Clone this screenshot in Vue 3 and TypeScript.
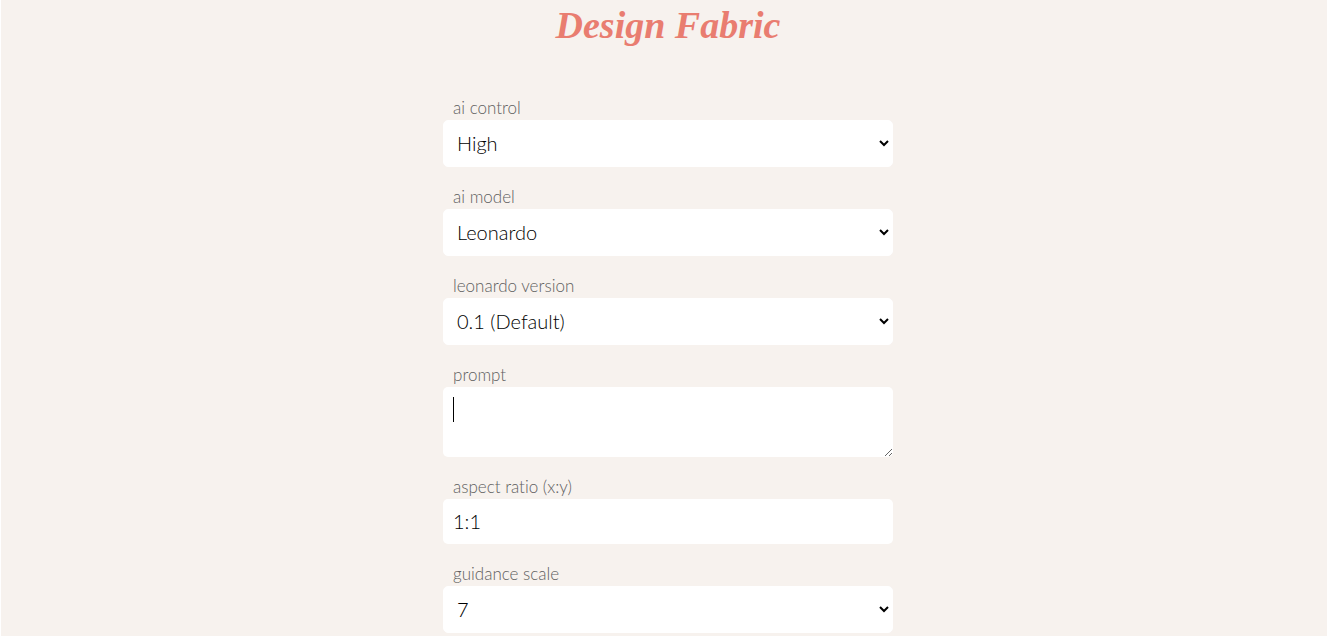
<script setup lang="ts">
import { ref, onMounted } from 'vue'

const control = ref('High')
const model = ref('Leonardo')
const version = ref('0.1 (Default)')
const prompt = ref('')
const ratio = ref('1:1')
const guidance = ref('7')

const promptBox = ref<HTMLTextAreaElement | null>(null)
onMounted(() => promptBox.value?.focus())
</script>

<template>
  <main class="page">
    <h1 class="title">Design Fabric</h1>
    <form class="form" @submit.prevent>
      <div class="field">
        <label for="control">ai control</label>
        <select id="control" v-model="control">
          <option>High</option>
          <option>Low</option>
        </select>
      </div>
      <div class="field">
        <label for="model">ai model</label>
        <select id="model" v-model="model">
          <option>Leonardo</option>
        </select>
      </div>
      <div class="field">
        <label for="version">leonardo version</label>
        <select id="version" v-model="version">
          <option>0.1 (Default)</option>
        </select>
      </div>
      <div class="field">
        <label for="prompt">prompt</label>
        <div class="prompt">
          <textarea id="prompt" ref="promptBox" v-model="prompt"></textarea>
          <span v-if="!prompt" class="caret" aria-hidden="true"></span>
        </div>
      </div>
      <div class="field">
        <label for="ratio">aspect ratio (x:y)</label>
        <input id="ratio" v-model="ratio" type="text" />
      </div>
      <div class="field">
        <label for="guidance">guidance scale</label>
        <select id="guidance" v-model="guidance">
          <option v-for="n in 20" :key="n">{{ n }}</option>
        </select>
      </div>
    </form>
  </main>
</template>

<style>
body {
  background: #f7f2ee;
}
</style>

<style scoped>
.page {
  box-sizing: border-box;
  min-height: 100vh;
  padding-left: 8px;
  border-left: 1px solid #fff;
  background: #f7f2ee;
  font-family: Lato, 'Open Sans', sans-serif;
  font-weight: 300;
  font-variant-ligatures: none;
}
.title {
  margin: 0;
  height: 98px;
  color: #e97d70;
  font: italic bold 38px/50px 'Liberation Serif', serif;
  text-align: center;
}
.form {
  display: flex;
  flex-direction: column;
  gap: 20px;
  max-width: 450px;
  margin: 0 auto;
}
.field {
  display: flex;
  flex-direction: column;
}
label {
  padding: 0 10px 2px;
  color: #606060;
  font-size: 17px;
  line-height: 20px;
}
select,
input,
textarea {
  box-sizing: border-box;
  width: 100%;
  margin: 0;
  border: 0;
  border-radius: 5px;
  outline: 0;
  background: #fff;
  color: #000;
  font: inherit;
  font-size: 20px;
}
select {
  height: 47px;
  padding: 8px 9px 10px;
  border: 1px solid #fff;
}
input {
  height: 45px;
  padding: 9px 10px 11px;
}
.prompt {
  position: relative;
  display: flex;
}
textarea {
  height: 70px;
  padding: 10px;
  line-height: 25px;
  resize: vertical;
  caret-color: transparent;
}
.caret {
  position: absolute;
  top: 10px;
  left: 10px;
  width: 1px;
  height: 25px;
  background: #000;
  pointer-events: none;
}
</style>
